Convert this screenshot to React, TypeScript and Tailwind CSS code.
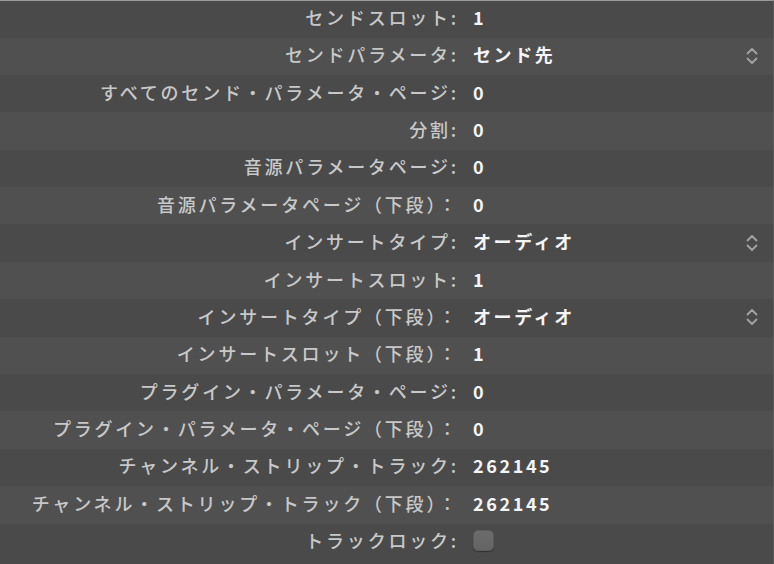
import React from 'react';

type Row = { label: string; value?: string; popup?: boolean; checkbox?: boolean };

const ROWS: Row[] = [
  { label: 'センドスロット:', value: '1' },
  { label: 'センドパラメータ:', value: 'センド先', popup: true },
  { label: 'すべてのセンド・パラメータ・ページ:', value: '0' },
  { label: '分割:', value: '0' },
  { label: '音源パラメータページ:', value: '0' },
  { label: '音源パラメータページ（下段）：', value: '0' },
  { label: 'インサートタイプ:', value: 'オーディオ', popup: true },
  { label: 'インサートスロット:', value: '1' },
  { label: 'インサートタイプ（下段）：', value: 'オーディオ', popup: true },
  { label: 'インサートスロット（下段）：', value: '1' },
  { label: 'プラグイン・パラメータ・ページ:', value: '0' },
  { label: 'プラグイン・パラメータ・ページ（下段）：', value: '0' },
  { label: 'チャンネル・ストリップ・トラック:', value: '262145' },
  { label: 'チャンネル・ストリップ・トラック（下段）：', value: '262145' },
  { label: 'トラックロック:', checkbox: true },
];

function UpDown() {
  return (
    <svg width="14" height="20" viewBox="0 0 14 20" fill="none" stroke="#a3a3a3" strokeWidth="1.8" strokeLinecap="round" strokeLinejoin="round">
      <path d="M2.5 7.5 L7 3 L11.5 7.5" />
      <path d="M2.5 12.5 L7 17 L11.5 12.5" />
    </svg>
  );
}

export default function App() {
  return (
    <div
      className="w-[774px] h-[564px] overflow-hidden bg-[#4b4b4b] border-t border-[#9a9a9a] border-r border-r-[#5c5c5c]"
      style={{ fontFamily: '"Noto Sans CJK JP", "Noto Sans", sans-serif' }}
    >
      {ROWS.map((row, idx) => (
        <div
          key={idx}
          className={`flex items-center pb-[3px] ${idx % 2 === 0 ? 'bg-[#4a4a4a]' : 'bg-[#505050]'} ${idx === 0 ? 'h-[36.5px]' : 'h-[37.4px]'}`}
        >
          <div className="w-[459px] shrink-0 text-right text-[18px] tracking-[2.8px] font-medium text-[#c8c8c8] whitespace-nowrap">
            {row.label}
          </div>
          <div className="flex-1 flex items-center pl-[14px] pr-[14px]">
            {row.checkbox ? (
              <div className="w-[21px] h-[21px] rounded-[5px] bg-gradient-to-b from-[#6c6c6c] to-[#646464] border border-[#5c5c5c] shadow-[0_1px_1px_rgba(0,0,0,0.35)]" />
            ) : (
              <span className="text-[18px] tracking-[2.6px] font-semibold text-[#f4f4f4] whitespace-nowrap">{row.value}</span>
            )}
            {row.popup && (
              <div className="ml-auto mt-[2px]">
                <UpDown />
              </div>
            )}
          </div>
        </div>
      ))}
    </div>
  );
}
